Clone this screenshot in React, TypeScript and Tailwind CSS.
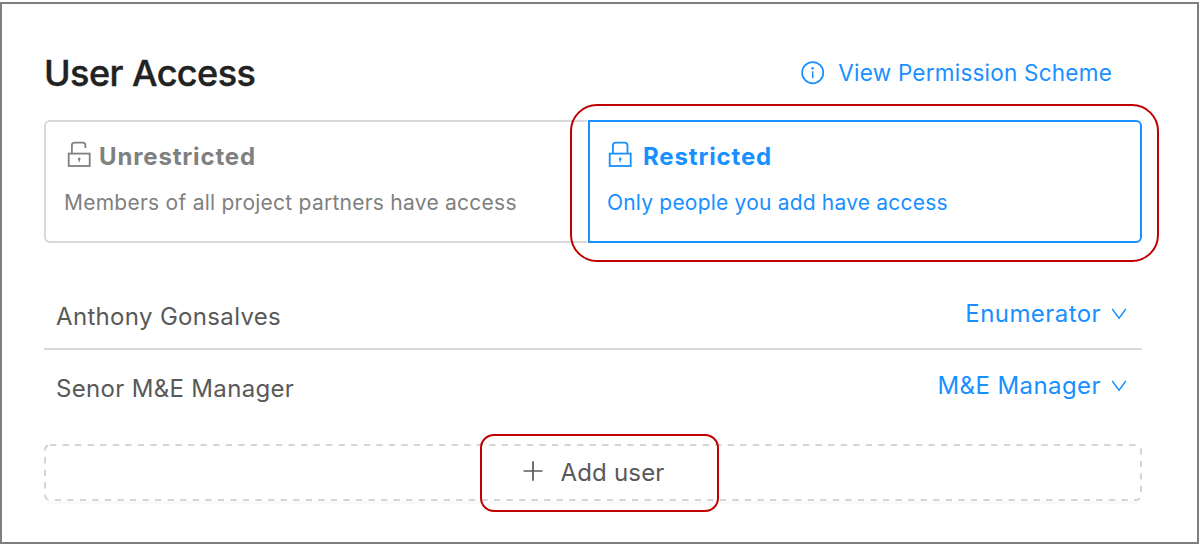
import type { ReactNode } from "react";

function LockIcon({ open = false }: { open?: boolean }) {
  return (
    <svg width="24" height="28" viewBox="0 0 24 28" fill="none" stroke="currentColor" strokeWidth="1.8">
      <rect x="1.7" y="12.6" width="21" height="12.4" />
      {open ? (
        <path d="M4.9 12.6V4.3Q4.9 1.7 7.6 1.7H15.7Q18.4 1.7 18.4 4.3V7.1" />
      ) : (
        <path d="M4.9 12.6V4.7Q4.9 1.7 7.9 1.7H16.5Q19.5 1.7 19.5 4.7V12.6" />
      )}
      <circle cx="12.2" cy="17.9" r="1.3" fill="currentColor" stroke="none" />
      <path d="M12.2 18V21" strokeWidth="1.2" />
    </svg>
  );
}

function InfoIcon() {
  return (
    <svg width="24" height="24" viewBox="0 0 24 24" fill="none" stroke="currentColor">
      <circle cx="11.7" cy="11.7" r="10.6" strokeWidth="1.7" />
      <path d="M11.7 10.3V17.2" strokeWidth="1.5" />
      <circle cx="11.7" cy="7.3" r="1.25" fill="currentColor" stroke="none" />
    </svg>
  );
}

function ChevronIcon() {
  return (
    <svg width="16" height="12" viewBox="0 0 16 12" fill="none" stroke="currentColor" strokeWidth="1.4">
      <path d="M1.2 1L8 10.2L14.8 1" />
    </svg>
  );
}

function PlusIcon() {
  return (
    <svg className="mb-[3px]" width="20" height="20" viewBox="0 0 20 20" fill="none" stroke="currentColor" strokeWidth="1.7">
      <path d="M10 0.3V19.7M0.6 10H19.4" />
    </svg>
  );
}

function UserRow({ name, role }: { name: ReactNode; role: ReactNode }) {
  return (
    <div className="flex h-[70px] items-center justify-between pr-[15px] pl-3 whitespace-nowrap">
      <span className="pt-[8px] text-[#595959]">{name}</span>
      <button className="flex items-center gap-[10px] pt-[2px] tracking-[0.43px] text-[#1890ff]">
        {role}
        <ChevronIcon />
      </button>
    </div>
  );
}

export default function App() {
  return (
    <div className="h-[545px] bg-white pt-[2px] pr-[1px] font-['Inter','Liberation_Sans',sans-serif] text-[#595959]">
      <main className="h-[542px] border-2 border-[#7f7f7f] px-[42px] pt-[45px]">
        <header className="flex h-[48px] items-center justify-between pr-[43px] whitespace-nowrap">
          <h1 className="text-[36px] leading-[48px] font-medium tracking-[-0.55px] text-[#222] [-webkit-text-stroke:0.4px_#222]">User Access</h1>
          <a className="flex items-center gap-[13px] text-[22.5px] tracking-[0.23px] text-[#1890ff]">
            <InfoIcon />
            <span>View Permission Scheme</span>
          </a>
        </header>

        <section className="mt-[23px] flex h-[123px] w-[1098px] whitespace-nowrap">
          <div className="w-[543px] rounded-l-[6px] border-2 border-r-0 border-[#d9d9d9] pt-[17px] pl-[18px] text-[#808080]">
            <div className="flex h-[32px] items-center gap-[8px] pl-[3px] text-[24px] font-bold tracking-[0.85px]">
              <LockIcon open />
              <span className="pt-[3px]">Unrestricted</span>
            </div>
            <p className="mt-[16px] text-[21px] leading-[32px] tracking-[0.25px]">Members of all project partners have access</p>
          </div>
          <div className="relative ml-[1px] flex-1 rounded-r-[6px] border-2 border-[#1890ff] pt-[17px] pl-[17px] text-[#1890ff]">
            <div className="flex h-[32px] items-center gap-[11px] pl-[1px] text-[24px] font-bold tracking-[0.85px]">
              <LockIcon />
              <span className="pt-[3px]">Restricted</span>
            </div>
            <p className="mt-[16px] text-[21px] leading-[32px] tracking-[0.2px]">Only people you add have access</p>
            <div className="pointer-events-none absolute -top-[18px] -left-[20px] h-[158px] w-[589px] rounded-[27px] border-2 border-[#c00000]" />
          </div>
        </section>

        <section className="mt-[35px] w-[1098px] text-[24px] tracking-[0.33px]">
          <UserRow name="Anthony Gonsalves" role="Enumerator" />
          <div className="h-[2px] bg-[#d9d9d9]" />
          <UserRow name="Senor M&E Manager" role="M&E Manager" />
        </section>

        <button className="relative mt-[24px] flex h-[57px] w-[1098px] items-center justify-center gap-[17px] pl-[2px] text-[24px] tracking-[0.2px]">
          <svg className="absolute inset-0" width="1098" height="60" viewBox="0 0 1098 60" fill="none">
            <path d="M4 58.5H1094" stroke="#fafafa" strokeWidth="3" />
            <rect x="1" y="1" width="1096" height="55" rx="5" stroke="#d5d5d5" strokeWidth="2" strokeDasharray="6.3 6.25" />
          </svg>
          <PlusIcon />
          <span>Add user</span>
          <span className="pointer-events-none absolute -top-[10px] left-[436px] h-[78px] w-[239px] rounded-[14px] border-2 border-[#c00000]" />
        </button>
      </main>
    </div>
  );
}
